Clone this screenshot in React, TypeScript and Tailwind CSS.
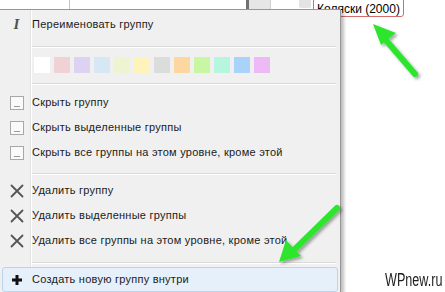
import React from 'react';

const SWATCHES = [
    '#ffffff', '#f0d2d6', '#ddd2f2', '#d6e8f4', '#eef4d2', '#fcf4ba',
    '#dcdcdc', '#fcd8a0', '#c8f6a2', '#b6f6de', '#aad2fa', '#eebaf6'
];

const HideIcon = () => (
    <div className="w-[14px] h-[14px] border border-[#a8a8a8] bg-[#fafafa] flex items-end justify-center pb-[2px]">
        <div className="w-[6px] h-px bg-[#9a9a9a]" />
    </div>
);

const DeleteIcon = () => (
    <svg width="14" height="14" viewBox="0 0 14 14">
        <path d="M1.5 1.5 L12.5 12.5 M12.5 1.5 L1.5 12.5" stroke="#555" strokeWidth="1.8" strokeLinecap="round" />
    </svg>
);

const Separator = () => (
    <div className="ml-[32px] mr-[4px] h-[2px] border-t border-[#dadada] border-b-white border-b" />
);

const Item = ({ icon, label, active = false }: { icon?: React.ReactNode; label: string; active?: boolean }) => (
    <div
        className={
            active
                ? 'flex items-center h-[25px] mx-[2px] rounded-[3px] border border-[#b9d5ee] bg-[#e5f0fa]'
                : 'flex items-center h-[25px] mx-[2px] border border-transparent'
        }
    >
        <div className="w-[27px] flex items-center justify-center shrink-0">{icon}</div>
        <span className="pl-[2px] text-[11px] tracking-[0.25px] text-[#1b1b1b] whitespace-nowrap">{label}</span>
    </div>
);

export default function App() {
    return (
        <div
            className="relative w-[445px] h-[292px] overflow-hidden bg-white"
            style={{ fontFamily: '"Liberation Sans", Arial, sans-serif' }}
        >
            {/* background strip above the menu */}
            <div className="flex h-[9px]">
                <div className="w-[70px] border-r border-[#c4c4c4]" />
                <div className="w-[176px]" />
                <div className="w-[3px] bg-[#707070]" />
                <div className="w-[22px] bg-[#e6e6e6] border-r border-[#d0d0d0]" />
            </div>

            {/* tree label behind */}
            <div className="absolute left-[299px] top-0 w-[12px] h-[8px] bg-[#e4e4e4] rounded-b-[2px]" />
            <div className="absolute left-[313px] top-[-2px] h-[19px] px-[3px] flex items-end pb-[1px] border border-[#d26a6a] rounded-[3px] bg-white">
                <span className="text-[12px] text-black leading-none whitespace-nowrap">Коляски (2000)</span>
            </div>

            {/* context menu */}
            <div className="relative w-[341px] h-[290px] bg-[#f0f0f0] border-t border-r border-[#979797] shadow-[3px_3px_3px_rgba(0,0,0,0.25)]">
                <div className="absolute left-[30px] top-0 bottom-0 w-[2px] border-l border-[#e2e2e2] border-r border-r-white" />
                <div className="relative flex flex-col pt-[2px]">
                    <Item
                        icon={<span className="text-[15px] font-bold italic text-[#505050]" style={{ fontFamily: '"Liberation Serif", serif' }}>I</span>}
                        label="Переименовать группу"
                    />
                    <div className="h-[9px]" />
                    <Separator />
                    <div className="flex gap-[4px] pl-[34px] pt-[9px] pb-[10px]">
                        {SWATCHES.map((c) => (
                            <div key={c} className="w-[16px] h-[16px]" style={{ backgroundColor: c }} />
                        ))}
                    </div>
                    <Separator />
                    <div className="h-[5px]" />
                    <Item icon={<HideIcon />} label="Скрыть группу" />
                    <Item icon={<HideIcon />} label="Скрыть выделенные группы" />
                    <Item icon={<HideIcon />} label="Скрыть все группы на этом уровне, кроме этой" />
                    <div className="h-[8px]" />
                    <Separator />
                    <div className="h-[3px]" />
                    <Item icon={<DeleteIcon />} label="Удалить группу" />
                    <Item icon={<DeleteIcon />} label="Удалить выделенные группы" />
                    <Item icon={<DeleteIcon />} label="Удалить все группы на этом уровне, кроме этой" />
                    <div className="h-[9px]" />
                    <Separator />
                    <div className="h-[3px]" />
                    <Item
                        active
                        icon={
                            <svg width="12" height="12" viewBox="0 0 12 12">
                                <path d="M6 1 V11 M1 6 H11" stroke="#111" strokeWidth="3" />
                            </svg>
                        }
                        label="Создать новую группу внутри"
                    />
                </div>
            </div>

            <div className="absolute left-[385px] top-[271px] text-[18px] text-[#1e1e1e] leading-none whitespace-nowrap origin-left scale-x-[0.7]">WPnew.ru</div>

            {/* green arrows */}
            <svg className="absolute inset-0 pointer-events-none" width="445" height="292">
                <defs>
                    <filter id="sh" x="-20%" y="-20%" width="140%" height="140%">
                        <feDropShadow dx="2" dy="2" stdDeviation="1.5" floodColor="#000" floodOpacity="0.35" />
                    </filter>
                </defs>
                <g filter="url(#sh)" fill="#2ee52e" stroke="#2ee52e">
                    <line x1="415" y1="74" x2="384" y2="38" strokeWidth="6" strokeLinecap="round" />
                    <polygon points="373,24 396,33 381,45" stroke="none" />
                    <line x1="337" y1="208" x2="294" y2="250" strokeWidth="6" strokeLinecap="round" />
                    <polygon points="279,262 286,240 301,256" stroke="none" />
                </g>
            </svg>
        </div>
    );
}
